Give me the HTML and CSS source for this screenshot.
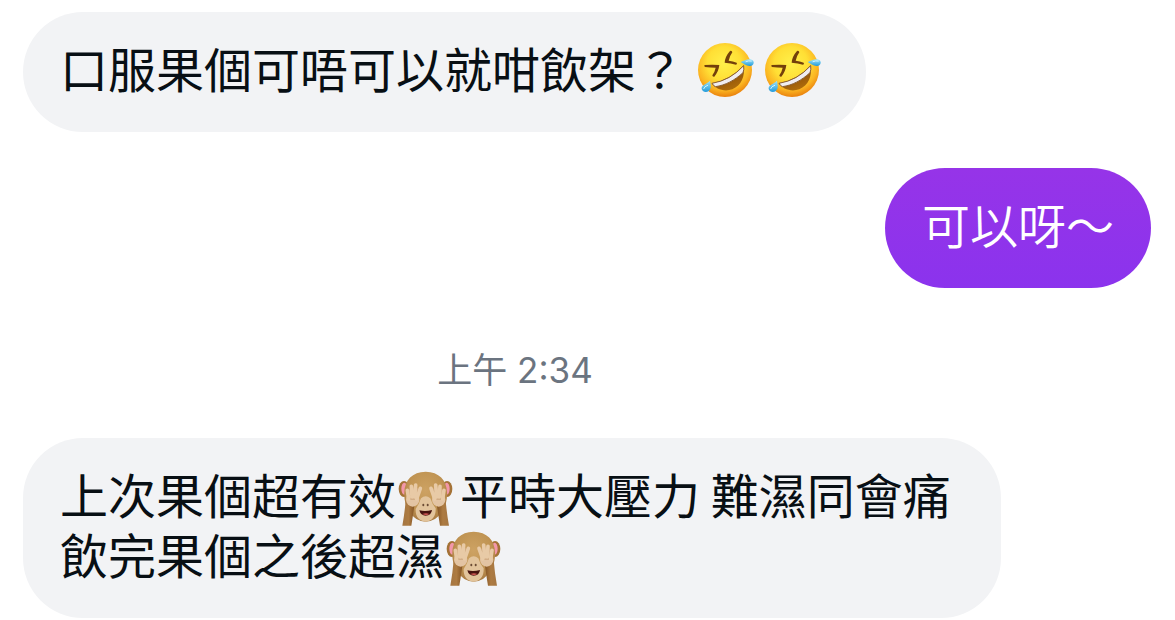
FILE: index.html
```
<!DOCTYPE html>
<html lang="zh-Hant-HK">

<head>
    <meta charset="UTF-8" />
    <meta name="viewport" content="width=device-width, initial-scale=1.0" />
    <title>訊息</title>
    <link rel="stylesheet" href="styles.css">
</head>

<body>

    <!-- Shared emoji shapes -->
    <svg class="defs" width="0" height="0" aria-hidden="true">
        <defs>
            <radialGradient id="faceFill" cx="0.48" cy="0.38" r="0.62">
                <stop offset="0" stop-color="#fff04a" />
                <stop offset="0.5" stop-color="#ffdf35" />
                <stop offset="0.8" stop-color="#fbb522" />
                <stop offset="1" stop-color="#ea820e" />
            </radialGradient>
            <linearGradient id="mouthFill" x1="0" y1="0" x2="0.5" y2="1">
                <stop offset="0" stop-color="#703608" />
                <stop offset="1" stop-color="#ad6b0b" />
            </linearGradient>
            <linearGradient id="tearFill" x1="0" y1="0" x2="0" y2="1">
                <stop offset="0" stop-color="#a0e5fb" />
                <stop offset="1" stop-color="#239bdb" />
            </linearGradient>
            <radialGradient id="furFill" cx="0.5" cy="0.38" r="0.62">
                <stop offset="0" stop-color="#cda263" />
                <stop offset="0.65" stop-color="#c09453" />
                <stop offset="1" stop-color="#a87a41" />
            </radialGradient>
            <linearGradient id="armFill" x1="0" y1="0" x2="1" y2="0">
                <stop offset="0" stop-color="#a57642" />
                <stop offset="0.5" stop-color="#ad7b42" />
                <stop offset="1" stop-color="#835322" />
            </linearGradient>

            <symbol id="rofl" viewBox="34 36 174 168">
                <circle cx="118" cy="120" r="81" fill="url(#faceFill)" />
                <path d="M57 105Q80 103 101 105Q99 124 86 140Q80 141 80 136Q88 124 90 113Q74 113 58 111Q54 108 57 105Z" fill="#73400b" />
                <path d="M133 63Q139 61 140 67Q132 78 129 92Q142 93 153 98Q156 103 151 104Q136 99 117 98Q118 80 133 63Z" fill="#73400b" />
                <path d="M78 160Q133 151 174 106C179 139 167 167 140 178C115 187 90 177 78 160Z" fill="url(#mouthFill)" />
                <path d="M79 160Q134 151 174 107Q176 119 172 128C147 151 119 166 89 170Q83 167 79 160Z" fill="#f0edf0" stroke="#8b5f30" stroke-width="3" />
                <path d="M165 96C177 92 187 85 198 89C207 93 206 103 197 107C184 110 175 102 165 96Z" fill="url(#tearFill)" />
                <path d="M73 152C75 165 78 175 70 182C62 189 51 186 48 177C46 165 62 163 73 152Z" fill="url(#tearFill)" />
                <path d="M181 95Q189 91 197 93M66 166Q56 169 54 176" fill="none" stroke="#d1f4ff" stroke-width="3" stroke-linecap="round" />
            </symbol>

            <symbol id="monkey" viewBox="25 34 165 165">
                <ellipse cx="43" cy="88" rx="16" ry="24" fill="#a47236" />
                <ellipse cx="172" cy="88" rx="16" ry="24" fill="#a47236" />
                <ellipse cx="44" cy="87" rx="9" ry="18" fill="#f297a9" />
                <ellipse cx="171" cy="87" rx="9" ry="18" fill="#f297a9" />
                <path d="M108 36C68 36 45 62 44 98C42 132 56 160 80 178Q108 194 136 178C160 160 174 132 172 98C171 62 148 36 108 36Z" fill="url(#furFill)" />
                <path d="M94 116Q108 104 122 116Q128 135 138 146C139 171 128 184 108 186C88 184 77 171 78 148Q88 134 94 116Z" fill="#e2c49c" />
                <ellipse cx="101" cy="136" rx="3" ry="4" fill="#6b4b34" />
                <ellipse cx="114" cy="136" rx="3" ry="4" fill="#6b4b34" />
                <path d="M89 152Q107 157 127 151Q125 168 108 168Q93 168 89 152Z" fill="#47130f" />
                <path d="M98 163Q109 158 119 163Q110 170 98 163Z" fill="#cc5551" />
                <g id="hand">
                    <path d="M48 122L75 132Q70 168 65 198H38Q45 160 48 122Z" fill="url(#armFill)" />
                    <ellipse cx="69" cy="120" rx="20" ry="21" fill="#e3c4a3" />
                    <path d="M53 95L65 86L77 82L91 90L84 120H56Z" fill="#cda67c" />
                    <g fill="none" stroke="#e8caa6" stroke-width="11" stroke-linecap="round">
                        <path d="M53 92L57 118M65 80L67 112M78 76L75 112M92 86L81 118" />
                    </g>
                </g>
                <use href="#hand" transform="translate(216 0) scale(-1 1)" />
            </symbol>
        </defs>
    </svg>

    <main class="thread">
        <div class="bubble received">口服果個可唔可以就咁飲架？ <svg class="emoji rofl" role="img" aria-label="笑到碌地"><use href="#rofl" /></svg><svg class="emoji rofl" role="img" aria-label="笑到碌地"><use href="#rofl" /></svg></div>

        <div class="bubble sent">可以呀～</div>

        <time class="timestamp" datetime="02:34">上午 2:34</time>

        <div class="bubble received">上次果個超有效<svg class="emoji monkey" role="img" aria-label="掩眼馬騮"><use href="#monkey" /></svg>平時大壓力 難濕同會痛飲完果個之後超濕<svg class="emoji monkey" role="img" aria-label="掩眼馬騮"><use href="#monkey" /></svg></div>
    </main>

</body>

</html>
```
FILE: styles.css
```
body {
    margin: 0;
    background-color: #fff;
    font-family: "Noto Sans CJK TC", sans-serif;
}

.defs {
    position: absolute;
}

.thread {
    display: flex;
    flex-direction: column;
    padding: 12px 24px 0 23px;
}

.bubble {
    box-sizing: border-box;
    max-width: calc(100% - 150px);
    padding: 25px 37px 35px;
    border-radius: 60px;
    font-size: 48px;
    line-height: 60px;
}

.received {
    align-self: flex-start;
    background-color: #f2f3f5;
    color: #080f14;
}

.sent {
    align-self: flex-end;
    margin-top: 36px;
    background: linear-gradient(#9634e8, #8b33ed);
    color: #fff;
    font-weight: 350;
}

.timestamp {
    margin: 56px 0 42px;
    padding-right: 144px;
    color: #6b7480;
    font-family: Inter, "Noto Sans CJK TC", sans-serif;
    font-size: 35px;
    line-height: 52px;
    text-align: center;
}

/* Emoji */

.emoji {
    margin: 0 7px -4px 2px;
}

.rofl {
    width: 58px;
    height: 56px;
    vertical-align: -6px;
}

.monkey {
    width: 55px;
    height: 55px;
    vertical-align: -8px;
}
```
